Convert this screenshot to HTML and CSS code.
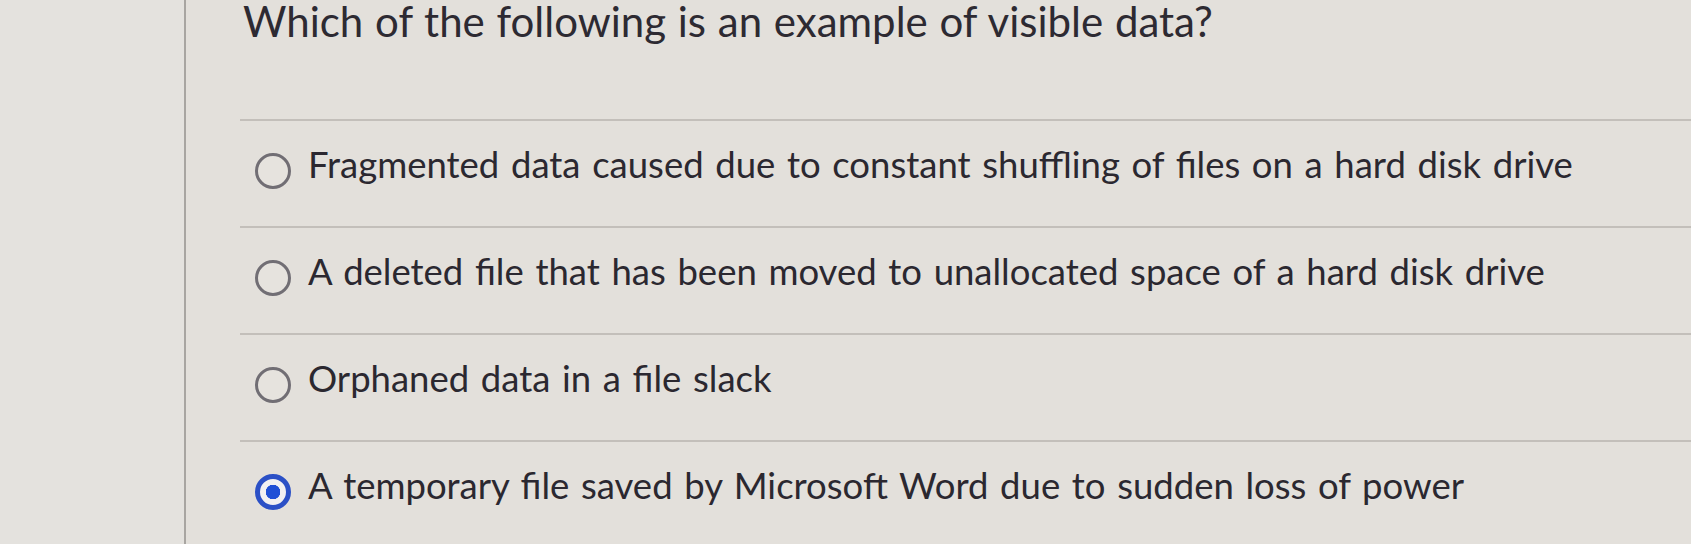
FILE: index.html
```html
<!DOCTYPE html>
<html lang="en">
<head>
<meta charset="utf-8">
<title>Question</title>
<link rel="stylesheet" href="styles.css">
</head>
<body>
<div class="page">
  <aside class="sidebar"></aside>
  <main class="content">
    <h1 class="question">Which of the following is an example of visible data?</h1>
    <ul class="answers">
      <li class="answer"><span class="radio"></span><span class="label">Fragmented data caused due to constant shuffling of files on a hard disk drive</span></li>
      <li class="answer"><span class="radio"></span><span class="label">A deleted file that has been moved to unallocated space of a hard disk drive</span></li>
      <li class="answer"><span class="radio"></span><span class="label">Orphaned data in a file slack</span></li>
      <li class="answer"><span class="radio radio-checked"></span><span class="label">A temporary file saved by Microsoft Word due to sudden loss of power</span></li>
    </ul>
  </main>
</div>
</body>
</html>
```
FILE: styles.css
```css
html, body {
  margin: 0;
  padding: 0;
  background: #e3e0db;
}
body {
  font-family: Lato, "Open Sans", sans-serif;
  color: #2b2830;
}
.page {
  display: flex;
  height: 544px;
  overflow: hidden;
}
.sidebar {
  width: 184px;
  flex: none;
  border-right: 2px solid #a8a5a1;
  background: #e4e2de;
}
.content {
  flex: 1;
  padding-left: 54px;
}
.question {
  margin: 0 0 0 3px;
  font-size: 42px;
  line-height: 42px;
  word-spacing: 1px;
  font-weight: 400;
  color: #2d2a32;
}
.answers {
  list-style: none;
  margin: 77px 0 0;
  padding: 0;
}
.answer {
  box-sizing: border-box;
  height: 107px;
  border-top: 2px solid #c3bfba;
  padding-top: 21px;
  display: flex;
  align-items: flex-start;
}
.radio {
  box-sizing: border-box;
  flex: none;
  width: 36px;
  height: 36px;
  margin: 11px 17px 0 15px;
  border: 3px solid #716e74;
  border-radius: 50%;
  background: #e6e3de;
}
.radio-checked {
  border: 5px solid #2b50c6;
  background: radial-gradient(circle, #1f4fd6 0 7px, #f1f0f2 7.5px);
}
.label {
  font-size: 36.5px;
  line-height: 44px;
  word-spacing: 2.3px;
  white-space: nowrap;
}
```
